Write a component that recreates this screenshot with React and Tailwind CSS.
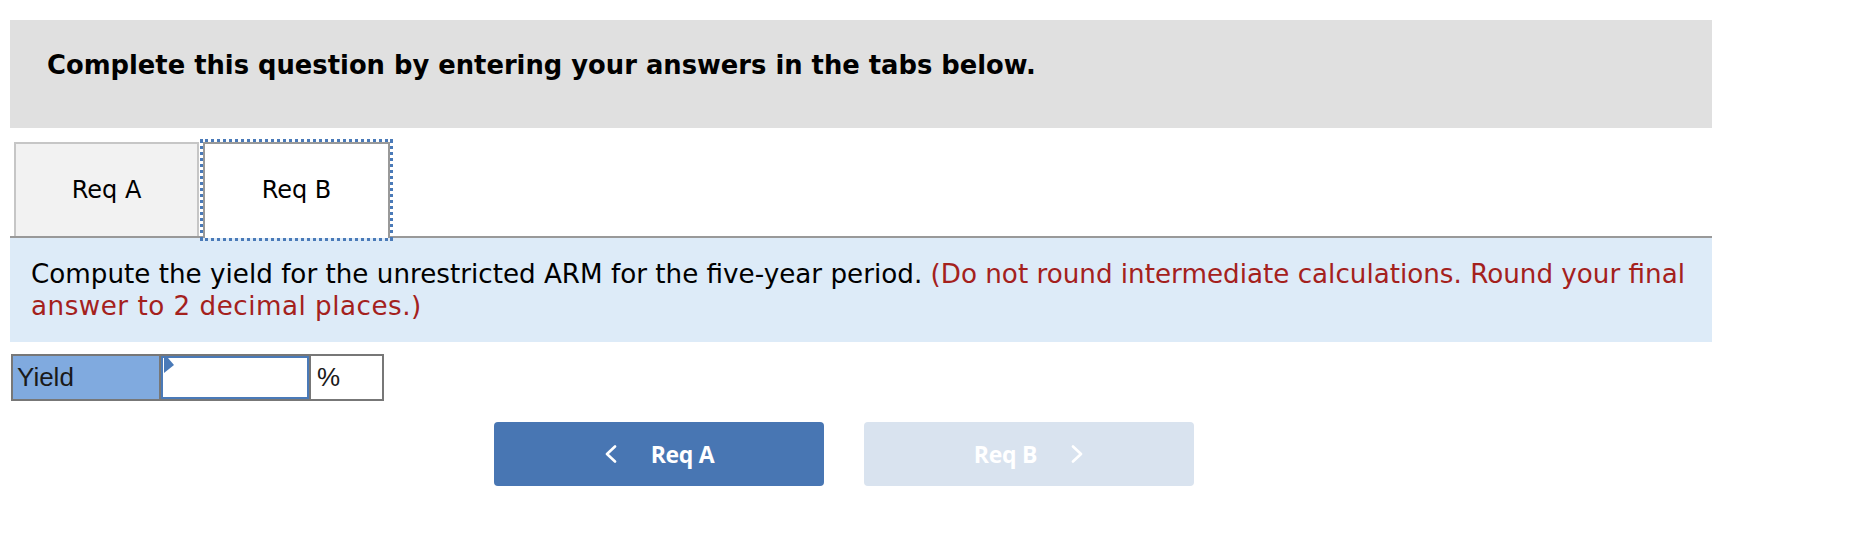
import React from "react";

function ChevronLeft() {
  return (
    <svg width="13" height="18" viewBox="0 0 13 18" fill="none">
      <path d="M11 1.5 L3 9 L11 16.5" stroke="white" strokeWidth="2.6" strokeLinecap="round" strokeLinejoin="round" />
    </svg>
  );
}

function ChevronRight() {
  return (
    <svg width="13" height="18" viewBox="0 0 13 18" fill="none">
      <path d="M2 1.5 L10 9 L2 16.5" stroke="white" strokeWidth="2.6" strokeLinecap="round" strokeLinejoin="round" />
    </svg>
  );
}

export default function App() {
  const dv = { fontFamily: '"DejaVu Sans", Verdana, sans-serif' };
  return (
    <div className="w-[1850px] h-[534px] bg-white pl-[10px] pt-[20px]">
      <div className="w-[1702px]">
        {/* header */}
        <div
          className="h-[108px] bg-[#e0e0e0] pl-[37px] pt-[29px] text-[25.8px] leading-[32px] font-bold text-black"
          style={dv}
        >
          Complete this question by entering your answers in the tabs below.
        </div>

        {/* tabs */}
        <div className="mt-[14px] flex items-end border-b-2 border-[#999999] pl-[4px]" style={dv}>
          <div className="w-[185px] h-[94px] flex items-center justify-center bg-[#f2f2f2] border-2 border-b-0 border-[#c6c6c6] text-[24px] text-black">
            Req A
          </div>
          <div className="ml-[4px] relative z-10 -mb-[2px] w-[187px] h-[96px] flex items-center justify-center bg-white border-2 border-b-0 border-[#999999] outline-[3px] outline-dotted outline-[#4a7ab8] text-[24px] text-black">
            <span className="-mt-[2px]">Req B</span>
          </div>
        </div>

        {/* instructions */}
        <div
          className="bg-[#ddebf8] pl-[21px] pr-[10px] pt-[20px] pb-[20px] text-[26.2px] leading-[32px] text-black"
          style={dv}
        >
          Compute the yield for the unrestricted ARM for the five-year period.{" "}
          <span className="text-[#a4211d]">
            (Do not round intermediate calculations. Round your final
            <br />
            <span className="tracking-[0.5px]">answer to 2 decimal places.)</span>
          </span>
        </div>

        {/* yield row */}
        <div
          className="mt-[12px] ml-[1px] flex w-[373px] h-[47px] border-2 border-[#777777] text-[26px] text-[#1a1a1a]"
          style={{ fontFamily: '"Liberation Sans", Arial, sans-serif' }}
        >
          <div className="w-[146px] bg-[#80aadf] flex items-center pl-[4px]">Yield</div>
          <div className="w-[150px] border-l-2 border-[#777777] relative">
            <div className="h-full w-full border-2 border-[#4a7ab8] bg-white"></div>
            <svg className="absolute left-[3px] top-[2px]" width="11" height="16" viewBox="0 0 11 16">
              <polygon points="0,0 4,0 10,7 0,15" fill="#4a7ab8" />
            </svg>
          </div>
          <div className="flex-1 border-l-2 border-[#777777] bg-white flex items-center pl-[6px]">%</div>
        </div>

        {/* nav buttons */}
        <div
          className="mt-[21px] ml-[484px] flex gap-[40px]"
          style={{ fontFamily: '"Open Sans", Roboto, sans-serif' }}
        >
          <div className="w-[330px] h-[64px] rounded-[4px] bg-[#4876b3] flex items-center justify-center gap-[34px] text-white text-[23px] font-bold">
            <ChevronLeft />
            <span className="tracking-[-0.3px]">Req A</span>
          </div>
          <div className="w-[330px] h-[64px] rounded-[4px] bg-[#d9e3ef] flex items-center justify-center gap-[34px] text-white text-[23px] font-bold">
            <span className="tracking-[-0.3px]">Req B</span>
            <ChevronRight />
          </div>
        </div>
      </div>
    </div>
  );
}
